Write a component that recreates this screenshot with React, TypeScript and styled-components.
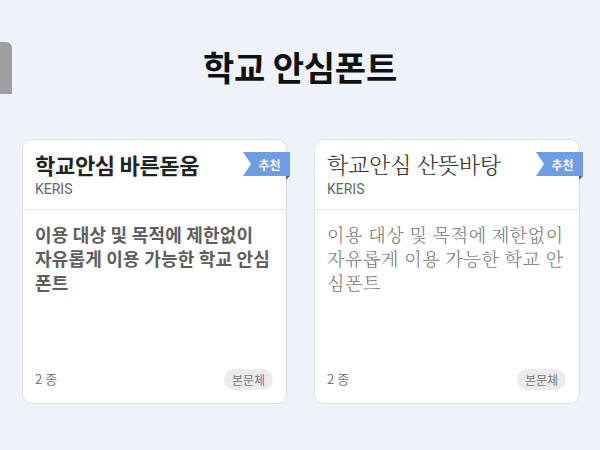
import React from "react";
import styled, { createGlobalStyle } from "styled-components";

const Global = createGlobalStyle`
  html, body { margin: 0; padding: 0; background: #eef2f9; }
  body { font-family: "Noto Sans CJK KR", "Noto Sans", sans-serif; }
`;

const Page = styled.div`
  position: relative;
  width: 600px;
  height: 450px;
  background: #eef2f9;
  overflow: hidden;
`;

const SideTab = styled.div`
  position: absolute;
  left: 0;
  top: 42px;
  width: 12px;
  height: 52px;
  background: #9e9e9e;
  border-top-right-radius: 6px;
`;

const Title = styled.h1`
  margin: 0;
  padding-top: 45px;
  height: 93px;
  box-sizing: border-box;
  text-align: center;
  font-size: 34px;
  line-height: 44px;
  font-weight: 700;
  color: #111;
  letter-spacing: -0.2px;
`;

const Grid = styled.div`
  display: grid;
  grid-template-columns: 265px 266px;
  gap: 27px;
  padding: 46px 0 0 22px;
`;

const Card = styled.div`
  position: relative;
  height: 265px;
  box-sizing: border-box;
  background: #fff;
  border: 1px solid #dde2ea;
  border-radius: 10px;
  display: flex;
  flex-direction: column;
`;

const Header = styled.div`
  padding: 10px 12px 10px;
  border-bottom: 1px solid #e2e5ea;
`;

const FontName = styled.div<{ $serif?: boolean }>`
  font-family: ${(p) =>
    p.$serif
      ? '"Noto Serif CJK KR", "Noto Serif KR", "Liberation Serif", serif'
      : '"Noto Sans CJK KR", sans-serif'};
  font-size: 22px;
  line-height: 28px;
  font-weight: ${(p) => (p.$serif ? 300 : 700)};
  color: ${(p) => (p.$serif ? "#333" : "#222")};
  letter-spacing: ${(p) => (p.$serif ? "-0.2px" : "-0.3px")};
`;

const Maker = styled.div`
  margin-top: 1px;
  font-family: Roboto, "Noto Sans CJK KR", sans-serif;
  font-size: 14px;
  line-height: 20px;
  color: #666;
`;

const Body = styled.div<{ $serif?: boolean }>`
  flex: 1;
  padding: 12px 12px 0;
  font-family: ${(p) =>
    p.$serif
      ? '"Noto Serif CJK KR", "Noto Serif KR", "Liberation Serif", serif'
      : '"Noto Sans CJK KR", sans-serif'};
  font-size: 18px;
  line-height: 24px;
  font-weight: ${(p) => (p.$serif ? 300 : 700)};
  color: ${(p) => (p.$serif ? "#7a7a7a" : "#5e5e5e")};
  letter-spacing: ${(p) => (p.$serif ? "0.6px" : "0.2px")};
`;

const Footer = styled.div`
  display: flex;
  align-items: center;
  justify-content: space-between;
  padding: 0 13px 13px 12px;
`;

const Count = styled.span`
  font-size: 13px;
  color: #777;
  margin-top: -3px;
`;

const Badge = styled.span`
  display: inline-flex;
  align-items: center;
  height: 21px;
  padding: 0 8px;
  border-radius: 11px;
  background: #ebebeb;
  color: #777;
  font-size: 12px;
`;

const Ribbon = styled.div`
  position: absolute;
  right: -4px;
  top: 12px;
  width: 47px;
  height: 24px;
  background: #6e9de2;
  color: #fff;
  font-size: 12px;
  font-weight: 700;
  display: flex;
  align-items: center;
  justify-content: center;
  padding-left: 6px;
  box-sizing: border-box;
  clip-path: polygon(0 0, 100% 0, 100% 100%, 0 100%, 8px 50%);
`;

const Fold = styled.div`
  position: absolute;
  right: -4px;
  top: 36px;
  width: 0;
  height: 0;
  border-top: 4px solid #3f66a6;
  border-right: 4px solid transparent;
`;

const fonts = [
  {
    name: "학교안심 바른돋움",
    serif: false,
    desc: "이용 대상 및 목적에 제한없이 자유롭게 이용 가능한 학교 안심 폰트",
  },
  {
    name: "학교안심 산뜻바탕",
    serif: true,
    desc: "이용 대상 및 목적에 제한없이 자유롭게 이용 가능한 학교 안심폰트",
  },
];

export default function App() {
  return (
    <Page>
      <Global />
      <SideTab />
      <Title>학교 안심폰트</Title>
      <Grid>
        {fonts.map((f) => (
          <Card key={f.name}>
            <Header>
              <FontName $serif={f.serif}>{f.name}</FontName>
              <Maker>KERIS</Maker>
            </Header>
            <Body $serif={f.serif}>{f.desc}</Body>
            <Footer>
              <Count>2 종</Count>
              <Badge>본문체</Badge>
            </Footer>
            <Ribbon>추천</Ribbon>
            <Fold />
          </Card>
        ))}
      </Grid>
    </Page>
  );
}
